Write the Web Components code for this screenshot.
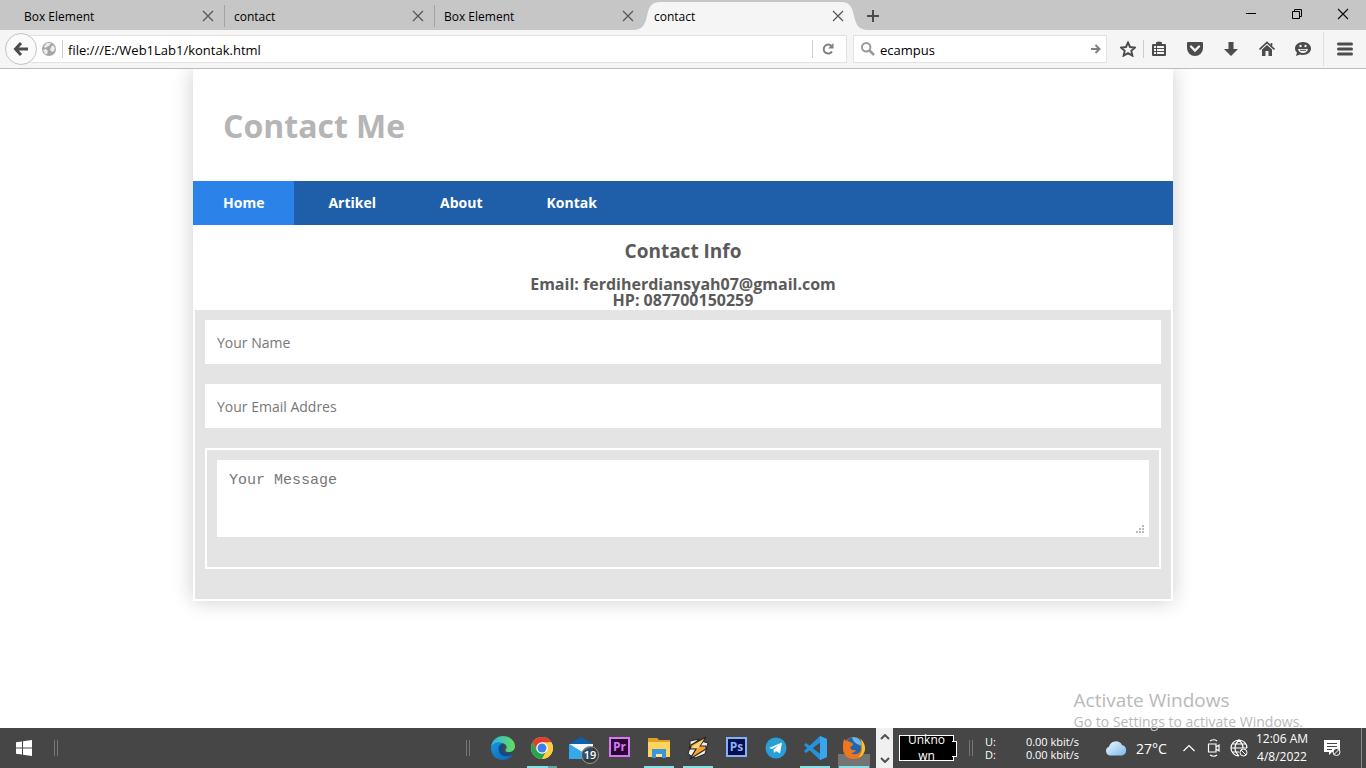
<!DOCTYPE html>
<html lang="en">
<head>
<meta charset="utf-8">
<title>contact</title>
<style>
html, body { margin: 0; height: 100%; }
body { font-family: "Open Sans", "Noto Sans", sans-serif; background: #fff; color: #000; overflow: hidden; }
</style>
</head>
<body>
<desktop-screen></desktop-screen>
<script>
const ICONS = {
  close: ['0 0 12 12', '<path d="M1 1 11 11M11 1 1 11" stroke="#555" stroke-width="1.2" fill="none"/>'],
  closeWin: ['0 0 12 12', '<path d="M1 1 11 11M11 1 1 11" stroke="#111" stroke-width="1.2" fill="none"/>'],
  plus: ['0 0 12 12', '<path d="M6 0V12M0 6H12" stroke="#4c4c4c" stroke-width="2"/>'],
  minimize: ['0 0 10 10', '<path d="M0 4.5H10" stroke="#000"/>'],
  restore: ['0 0 10 10', '<path d="M.5 2.500H7.500V9.500H.5ZM2.500 2.500V.5H9.500V7.500H7.500" fill="none" stroke="#000"/>'],
  back: ['0 0 16 16', '<path d="M8 2 2.500 8 8 14M3 8H15" fill="none" stroke="#4c4c4c" stroke-width="3"/>'],
  globe: ['0 0 14 14', '<circle cx="7" cy="7" r="7" fill="#a5a5a5"/><path d="M1 8 4 7 6 9 5 12 3 12ZM5 1 9 1 7 4 5 5 3 6 2 4ZM9 5 11 3 13 6 12 9 10 10 8 8Z" fill="#ececec"/>'],
  reload: ['0 0 12 12', '<path d="M9.500 3A4.500 4.500 0 1 0 10 8.500" fill="none" stroke="#808080" stroke-width="2"/><path d="M11.500 0V5.500H6Z" fill="#808080"/>'],
  search: ['0 0 14 14', '<circle cx="5.200" cy="5.200" r="4.200" fill="none" stroke="#999" stroke-width="2"/><path d="M8.500 8.500 13 13" stroke="#999" stroke-width="2.500"/>'],
  go: ['0 0 10 10', '<path d="M0 5H8M4.500 1 8.500 5 4.500 9" fill="none" stroke="#808080" stroke-width="2"/>'],
  star: ['0 0 16 16', '<path d="M8 1.500 10 6 15 6.500 11.300 9.800 12.400 14.700 8 12.200 3.600 14.700 4.700 9.800 1 6.500 6 6Z" fill="none" stroke="#4c4c4c" stroke-width="1.900"/>'],
  list: ['0 0 16 16', '<path d="M5 3V2Q5 .5 8 .5T11 2V3H14Q15 3 15 4V14Q15 15 14 15H2Q1 15 1 14V4Q1 3 2 3Z" fill="#4c4c4c"/><path d="M3 5H5V7H3ZM6 5H13V7H6ZM3 8H5V10H3ZM6 8H13V10H6ZM3 11H5V13H3ZM6 11H13V13H6Z" fill="#f5f5f5"/>'],
  pocket: ['0 0 16 16', '<path d="M1 1H15Q16 1 16 2V7A8 8 0 0 1 0 7V2Q0 1 1 1Z" fill="#4c4c4c"/><path d="M4 5.500 8 9.500 12 5.500" stroke="#f5f5f5" stroke-width="2.300" stroke-linecap="round" fill="none"/>'],
  down: ['0 0 16 16', '<path d="M5.500 1H10.500V8H15L8 15 1 8H5.500Z" fill="#4c4c4c"/>'],
  home: ['0 0 16 16', '<path d="M.5 8.500 8 1.500 15.500 8.500M12.500 2V5" stroke="#4c4c4c" stroke-width="1.700" fill="none"/><path d="M3 8.500 8 4 13 8.500V15H9.500V10H6.500V15H3Z" fill="#4c4c4c"/>'],
  chat: ['0 0 16 16', '<path d="M8 1C13 1 16 4 16 7.500S13 14 8 14Q6.500 14 5 13.500L1 15 2 11.500C.7 10.500 0 9 0 7.500C0 4 3 1 8 1Z" fill="#4c4c4c"/><circle cx="5.500" cy="5" r="1.200" fill="#f5f5f5"/><circle cx="10.500" cy="5" r="1.200" fill="#f5f5f5"/><path d="M3 8H13Q12 12 8 12T3 8Z" fill="#f5f5f5"/><path d="M5 9.300H11" stroke="#4c4c4c"/>'],
  menu: ['0 0 16 14', '<path d="M1.500 2H14.500M1.500 7H14.500M1.500 12H14.500" stroke="#4c4c4c" stroke-width="3" stroke-linecap="round"/>'],
  windows: ['0 0 16 16', '<path d="M0 2.300 6 1.400V7.400H0ZM7 1.300 16 0V7.400H7ZM0 8.400H6V14.500L0 13.700ZM7 8.400H16V16L7 14.700Z" fill="#fff"/>'],
  edge: ['0 0 24 24', '<defs><linearGradient id="e1" x1="0" x2="1"><stop offset="0" stop-color="#2db4ea"/><stop offset="1" stop-color="#63dd5c"/></linearGradient><linearGradient id="e2" x1="0" y1="0" x2="1" y2="1"><stop offset="0" stop-color="#1496dc"/><stop offset="1" stop-color="#1164b3"/></linearGradient></defs><path d="M0 11C1 4 6 0 12 0C19 0 24 5 24 10C24 14 21 16 18 16C14 16 14 14.500 15 13C17 10 14 7 10 7C6 7 2 8 0 11Z" fill="url(#e1)"/><path d="M0 11C2 6 9 5 12 8C9 8 8 11 8 14C8 19 14 22 22 18C19 22 16 24 12 24C5 24 0 19 0 12Z" fill="url(#e2)"/><path d="M12 8C8 8 7 12 8 15C9 20 16 22 22 18C23 17 22.500 16.500 21.500 17C17 19 12 17 11.500 13C11.300 11 12 10 13 9Z" fill="#114a8b"/>'],
  chrome: ['0 0 24 24', '<circle cx="12" cy="12" r="11" fill="#ffcd40"/><path d="M2.500 6.500A11 11 0 0 1 21.500 6.500H12L7.300 14.700Z" fill="#e33b2e"/><path d="M2.500 6.500 7.300 14.700 12 17.500 16.700 14.700 12 23A11 11 0 0 1 2.500 6.500Z" fill="#26a250"/><path d="M12 6.500H21.500A11 11 0 0 1 12 23L16.700 14.700Z" fill="#ffcd40"/><circle cx="12" cy="12" r="5.800" fill="#fff"/><circle cx="12" cy="12" r="4.500" fill="#3c7eea"/>'],
  mail: ['0 0 24 24', '<path d="M0 8 12 1 24 8V22H0Z" fill="#0b61ad"/><path d="M0 8H24V12L14 17Z" fill="#f4f7fa"/><path d="M0 8 15 17 24 21V23H0Z" fill="#36a9ee"/><path d="M24 10V22L13 16Z" fill="#1687d4"/>'],
  explorer: ['0 0 24 24', '<path d="M1 2H10L12 4H23V21H1Z" fill="#dba321"/><path d="M1 6H23V21H1Z" fill="#ffd45e"/><path d="M5 13H19V22H15V18H9V22H5Z" fill="#3c95dc"/><path d="M9 18H15V21H9Z" fill="#ffe49b"/>'],
  winamp: ['0 0 24 24', '<path d="M4 5 13 3 11 8 4 13ZM12 4 22 7 19 18 9 22 2 18 4 11Z" fill="#eee" stroke="#222"/><path d="M20 1 5 9 4 13 10 13 4 23 20 13 20 10 14 10Z" fill="#f5a22b" stroke="#252525" stroke-width="1.200"/><path d="M18 3 7 10 6 12H12L8 19Z" fill="#ffd57c"/>'],
  telegram: ['0 0 24 24', '<circle cx="12" cy="12" r="10.500" fill="#299fd8"/><path d="M5 12 18 6.500 16 17.500 12 15 10 17 9.500 13.500 15 9 8 13Z" fill="#fff"/>'],
  code: ['0 0 24 24', '<path d="M17 0 24 3V21L17 24 1 9 3 7 18 18.500V6L3 17 1 15Z" fill="#2493dc"/><path d="M17 0 24 3V21L17 24Z" fill="#36a6ef"/>'],
  firefox: ['0 0 24 24', '<circle cx="12" cy="12" r="11" fill="#e66a1c"/><circle cx="12" cy="10" r="9" fill="#2166ac"/><path d="M10 1C17 1 20 6 20 10L15 8Q11 6 10 1Z" fill="#6fb9e5"/><path d="M2 3Q3 5 6 5L10 7Q12 8 10 10L8 11Q9 15 14 14Q13 17 9 17Q14 20 18 16Q20 13 18 8Q22 11 21 16Q18 23 11 23Q1 22 1 11Q1 6 2 3Z" fill="#ee7620"/><path d="M19 3Q23 8 23 13Q22 20 16 22Q21 17 20 10Z" fill="#ffc32b"/>'],
  up: ['0 0 10 6', '<path d="M1 5 5 1 9 5" fill="none" stroke="#505050" stroke-width="2"/>'],
  dn: ['0 0 10 6', '<path d="M1 1 5 5 9 1" fill="none" stroke="#505050" stroke-width="2"/>'],
  cloud: ['0 0 22 16', '<defs><linearGradient id="c" x1="0" y1="0" x2="1" y2="1"><stop offset="0" stop-color="#f2faff"/><stop offset="1" stop-color="#77b9ef"/></linearGradient></defs><path d="M5 15.500A4.500 4.500 0 0 1 4 6.800A7 7 0 0 1 17 5A5.400 5.400 0 0 1 17 15.500Z" fill="url(#c)"/>'],
  chevron: ['0 0 12 8', '<path d="M.5 7 6 1.500 11.500 7" fill="none" stroke="#fff" stroke-width="1.200"/>'],
  meet: ['0 0 14 18', '<path d="M3 2Q7-.5 10 2M3 16Q7 18.500 10 16M1.500 5H9V13H1.500ZM9 8 12 6V12L9 10" fill="none" stroke="#fff" stroke-width="1.200"/>'],
  net: ['0 0 18 18', '<path d="M9 1A8 8 0 1 0 9 17M9 1A8 8 0 0 1 17 9M1 9H17M2 5H16M2 13H9M9 1Q5 5 5 9T9 17M9 1Q13 5 13 9" fill="none" stroke="#fff" stroke-width="1.200"/><circle cx="13.500" cy="13.500" r="3.500" fill="#464646" stroke="#fff"/><path d="M11 11 16 16" stroke="#fff"/>'],
  note: ['0 0 17 17', '<path d="M0 0H16V12H8L5 15V12H0Z" fill="#fff"/><path d="M3 3.500H13M3 6.500H13M3 9.500H8" stroke="#464646"/><circle cx="12.500" cy="12" r="3.500" fill="#464646" stroke="#fff"/><path d="M10 14.500 15 9.500" stroke="#fff"/>']
};

const BASE = '*{box-sizing:border-box}button{font:inherit;color:inherit;border:0;background:none;padding:0;margin:0;display:flex;align-items:center;justify-content:center}a{color:inherit;text-decoration:none}';

function define(name, render) {
  customElements.define(name, class extends HTMLElement {
    connectedCallback() {
      if (this.shadowRoot) return;
      const template = document.createElement('template');
      const { css, html } = render(this);
      template.innerHTML = `<style>${BASE}${css}</style>${html}`;
      this.attachShadow({ mode: 'open' }).append(template.content.cloneNode(true));
    }
  });
}

define('ui-icon', el => {
  const [box, shapes] = ICONS[el.getAttribute('name')];
  const [w, h] = box.split(' ').slice(2);
  return {
    css: ':host{display:block;flex:none}svg{display:block}',
    html: `<svg viewBox="${box}" width="${w}" height="${h}" aria-hidden="true">${shapes}</svg>`
  };
});

define('browser-tab', () => ({
  css: `:host{position:relative;display:flex;align-items:center;flex:0 1 210px;height:32px;padding:0 11px 0 9px;font-size:12px}
    :host::after{content:"";position:absolute;right:0;top:5px;height:22px;width:1px;background:#a2a2a2}
    :host([last])::after,:host([active])::after{display:none}
    .shape{display:none}
    :host([active]) .shape{display:block;position:absolute;left:-12px;top:2px}
    .label{position:relative;flex:1;justify-content:flex-start}
    .x{position:relative}`,
  html: `<svg class="shape" width="235" height="28" viewBox="0 0 235 28" aria-hidden="true"><path d="M0 28C9 28 12 23 14 14C16 4 19 0 27 0H208C216 0 219 4 221 14C223 23 226 28 235 28Z" fill="#f5f5f5"/></svg>
    <button class="label"><slot></slot></button><button class="x" aria-label="Close tab"><ui-icon name="close"></ui-icon></button>`
}));

define('tab-strip', () => ({
  css: `:host{display:flex;height:30px;background:#c6c6c6;padding-left:15px}
    .new{width:36px;height:32px;flex:none}
    .window{display:flex;margin-left:auto;height:28px}
    .window button{width:46px}`,
  html: `<browser-tab>Box Element</browser-tab><browser-tab>contact</browser-tab><browser-tab last>Box Element</browser-tab><browser-tab active>contact</browser-tab>
    <button class="new" aria-label="New tab"><ui-icon name="plus"></ui-icon></button>
    <div class="window"><button aria-label="Minimize"><ui-icon name="minimize"></ui-icon></button><button aria-label="Restore"><ui-icon name="restore"></ui-icon></button><button aria-label="Close"><ui-icon name="closeWin"></ui-icon></button></div>`
}));

define('nav-toolbar', () => ({
  css: `:host{display:flex;align-items:center;height:39px;background:#f5f5f5;border-bottom:1px solid #bcbcbc;padding-left:5px}
    .back{position:relative;width:32px;height:32px;border:1px solid #c4c4c4;border-radius:50%;background:#fafafa;flex:none}
    .field{display:flex;align-items:center;height:28px;background:#fff;border:1px solid #e2e2e2}
    .url{flex:1;margin-left:-16px;padding-left:20px}
    .search{width:254px;margin-left:6px;padding:0 5px 0 7px;gap:5px}
    input{flex:1;min-width:0;border:0;outline:0;padding:2px 0 0;background:none;font:13px/20px "Open Sans","Noto Sans",sans-serif;color:#000}
    .url input{margin-left:5px}
    .rule{width:1px;height:18px;background:#ccc;flex:none}
    .url .rule:first-of-type{margin-left:6px}
    .reload{width:33px;height:26px;padding-right:3px}
    .tools{display:flex;align-items:center;padding-left:3px}
    .tools button{width:36px;height:38px}
    .tools .narrow{width:33px;padding-left:3px}
    .tools .list{width:33px;padding-right:3px}
    .tall{width:1px;height:34px;background:#ddd;margin-left:2px}
    .tools .menu{width:42px}`,
  html: `<button class="back" aria-label="Back"><ui-icon name="back"></ui-icon></button>
    <div class="field url"><ui-icon name="globe"></ui-icon><span class="rule"></span><input aria-label="Address" value="file:///E:/Web1Lab1/kontak.html"><span class="rule"></span><button class="reload" aria-label="Reload"><ui-icon name="reload"></ui-icon></button></div>
    <div class="field search"><ui-icon name="search"></ui-icon><input aria-label="Search" value="ecampus"><button aria-label="Go"><ui-icon name="go"></ui-icon></button></div>
    <div class="tools"><button class="narrow" aria-label="Bookmark"><ui-icon name="star"></ui-icon></button><span class="rule"></span><button class="list" aria-label="Bookmarks list"><ui-icon name="list"></ui-icon></button>
    <button aria-label="Pocket"><ui-icon name="pocket"></ui-icon></button><button aria-label="Downloads"><ui-icon name="down"></ui-icon></button><button aria-label="Home page"><ui-icon name="home"></ui-icon></button><button aria-label="Hello"><ui-icon name="chat"></ui-icon></button><span class="tall"></span><button class="menu" aria-label="Menu"><ui-icon name="menu"></ui-icon></button></div>`
}));

define('site-nav', () => ({
  css: `:host{display:block;background:#1f5faa;color:#fff;font-size:14px;font-weight:700;line-height:14px}
    nav{display:flex;gap:4px}a{padding:15px 30px}a.on{background:#2b83ea}`,
  html: `<nav><a class="on" href="#home">Home</a><a href="#artikel">Artikel</a><a href="#about">About</a><a href="#kontak">Kontak</a></nav>`
}));

define('contact-form', () => ({
  css: `:host{display:block}
    form{background:#e4e4e4;border:2px solid #fff;padding:10px 10px 30px}
    input,textarea{display:block;width:100%;border:0;outline:0;border-radius:0;background:#fff;padding:12px;color:#555}
    input{height:44px;margin-bottom:20px;font:14px/20px "Open Sans","Noto Sans",sans-serif}
    fieldset{margin:0;min-width:0;border:2px solid #fff;padding:10px 10px 30px}
    .area{position:relative}
    textarea{height:77px;resize:none;overflow:hidden;font:15px/18px "Liberation Mono",monospace}
    ::placeholder{color:#777;opacity:1}
    .grip{position:absolute;right:5px;bottom:4px}`,
  html: `<form><input type="text" aria-label="Your Name" placeholder="Your Name"><input type="email" aria-label="Your Email Addres" placeholder="Your Email Addres">
    <fieldset><div class="area"><textarea aria-label="Your Message" placeholder="Your Message"></textarea><svg class="grip" width="8" height="8" aria-hidden="true"><path d="M6 0h2v2H6zM3 3h2v2H3zM6 3h2v2H6zM0 6h2v2H0zM3 6h2v2H3zM6 6h2v2H6z" fill="#bbb"/></svg></div></fieldset></form>`
}));

define('contact-page', () => ({
  css: `:host{display:block;width:100%;max-width:980px;margin:0 auto;background:#fff;box-shadow:0 0 20px rgba(0,0,0,.2);color:#5a5a5a}
    h1{margin:0;padding:41px 30px 39px;font-size:32px;line-height:32px;color:#b5b5b5}
    .info{padding-top:17px;text-align:center}
    h3{margin:0 0 15px;font-size:19px;line-height:19px}
    h4{margin:0;font-size:16px;line-height:16px}`,
  html: `<header><h1>Contact Me</h1></header><site-nav></site-nav><section class="info"><h3>Contact Info</h3><h4>Email: ferdiherdiansyah07@gmail.com<br>HP: 087700150259</h4></section><contact-form></contact-form>`
}));

define('task-app', el => ({
  css: `:host{position:relative;display:flex;width:39px;height:40px;flex:none;align-items:center;justify-content:center}
    :host([open])::after{content:"";position:absolute;left:5px;right:4px;bottom:0;height:2px;background:#85e2e2}
    :host([split])::after{background:linear-gradient(90deg,#85e2e2 21px,#66a3a3 21px)}
    :host([current])::before{content:"";position:absolute;left:4px;right:3px;bottom:0;height:14px;background:#747474}
    button{position:relative;width:39px;height:40px}
    .adobe{width:21px;height:20px;margin-bottom:2px;border:2px solid var(--edge);background:var(--fill);color:var(--edge);font:700 12px/15px "Open Sans",sans-serif;display:flex;justify-content:center}
    .badge{position:absolute;left:20px;top:18px;width:18px;height:18px;border:1px solid #999;border-radius:50%;background:#333b;color:#fff;font-size:11px;line-height:16px;font-weight:600;text-align:center}`,
  html: `<button aria-label="${el.getAttribute('label')}">${el.hasAttribute('icon') ? `<ui-icon name="${el.getAttribute('icon')}"></ui-icon>` : `<span class="adobe"><slot></slot></span>`}${el.hasAttribute('badge') ? `<span class="badge">${el.getAttribute('badge')}</span>` : ''}</button>`
}));

define('task-grip', () => ({
  css: ':host{display:block;flex:none;width:4px;height:16px;border:solid #777;border-width:0 1px}',
  html: ''
}));

define('task-bar', () => ({
  css: `:host{display:flex;align-items:center;height:40px;background:#464646;color:#fff}
    .start{width:48px;height:40px;margin-right:6px}
    .space{flex:1}
    .apps{display:flex;margin:0 3px 0 13px}
    .scroll{display:flex;flex-direction:column;justify-content:space-between;width:17px;height:40px;padding:6px 0 5px;background:#f0f0f0;align-items:center}
    .battery{position:relative;width:55px;height:26px;margin:0 15px 0 6px;border:1px solid #fff;background:#000;font-size:12px;line-height:16px;text-align:center}
    .battery::after{content:"";position:absolute;right:-4px;top:5px;width:4px;height:14px;background:#000;border:1px solid #fff;border-left:0}
    .battery div{height:24px;display:flex;flex-direction:column;justify-content:center}
    .rates{display:grid;grid-template-columns:auto auto;justify-content:space-between;width:94px;margin-left:12px;font-size:11px;line-height:13px}
    .rates span:nth-child(even){text-align:right}
    .weather{display:flex;align-items:center;gap:9px;margin-left:26px;width:71px;font-size:14px;white-space:nowrap}
    .tray{display:flex;align-items:center}
    .tray button{width:25px;height:40px}
    .clock{width:60px;text-align:center;font-size:12px;line-height:18px;white-space:nowrap;margin-left:1px}
    .note{width:40px;height:40px}
    .peek{width:5px;height:40px;margin-left:9px;border-left:1px solid #888}`,
  html: `<button class="start" aria-label="Start"><ui-icon name="windows"></ui-icon></button><task-grip></task-grip><span class="space"></span><task-grip></task-grip>
    <div class="apps"><task-app icon="edge" label="Edge"></task-app><task-app icon="chrome" label="Chrome" open split></task-app><task-app icon="mail" label="Mail" badge="19"></task-app><task-app label="Premiere Pro" style="--edge:#d678f2;--fill:#2a0634">Pr</task-app><task-app icon="explorer" label="File Explorer" open></task-app><task-app icon="winamp" label="Winamp" open></task-app><task-app label="Photoshop" style="--edge:#7fb5f5;--fill:#0b0b4f">Ps</task-app><task-app icon="telegram" label="Telegram"></task-app><task-app icon="code" label="Visual Studio Code" open></task-app><task-app icon="firefox" label="Firefox" open current></task-app></div>
    <div class="scroll"><button aria-label="Scroll up"><ui-icon name="up"></ui-icon></button><button aria-label="Scroll down"><ui-icon name="dn"></ui-icon></button></div>
    <div class="battery"><div><span>Unkno</span><span>wn</span></div></div><task-grip></task-grip>
    <div class="rates"><span>U:</span><span>0.00 kbit/s</span><span>D:</span><span>0.00 kbit/s</span></div>
    <div class="weather"><ui-icon name="cloud"></ui-icon><span>27°C</span></div>
    <div class="tray"><button aria-label="Hidden icons"><ui-icon name="chevron"></ui-icon></button><button aria-label="Meet now"><ui-icon name="meet"></ui-icon></button><button aria-label="Network"><ui-icon name="net"></ui-icon></button></div>
    <div class="clock"><div>12:06 AM</div><div>4/8/2022</div></div><button class="note" aria-label="Notifications"><ui-icon name="note"></ui-icon></button><span class="peek"></span>`
}));

define('activation-note', () => ({
  css: `:host{display:block;position:absolute;right:63px;bottom:36px;color:#b9b9b9;white-space:nowrap;pointer-events:none}
    .big{font-size:19px;line-height:24px}.small{font-size:14px;line-height:20px}`,
  html: `<div class="big">Activate Windows</div><div class="small">Go to Settings to activate Windows.</div>`
}));

define('desktop-screen', () => ({
  css: `:host{position:relative;display:flex;flex-direction:column;height:100vh;overflow:hidden}
    main{flex:1;min-height:0;overflow:hidden}`,
  html: `<tab-strip></tab-strip><nav-toolbar></nav-toolbar><main><contact-page></contact-page></main><task-bar></task-bar><activation-note></activation-note>`
}));
</script>
</body>
</html>
